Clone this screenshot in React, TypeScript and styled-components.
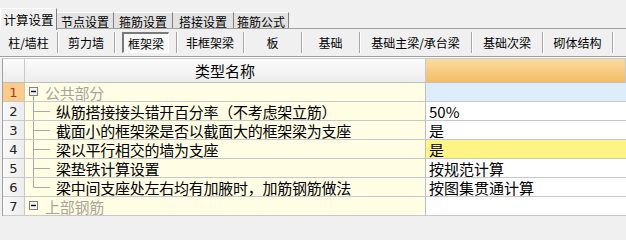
import styled, { createGlobalStyle, css } from "styled-components";

const GlobalStyle = createGlobalStyle`
  html, body {
    margin: 0;
    padding: 0;
    overflow: hidden;
    background: #f0f0f0;
    font-family: "Noto Sans CJK SC", "Liberation Sans", sans-serif;
  }
`;

const tabs = ["计算设置", "节点设置", "箍筋设置", "搭接设置", "箍筋公式"];
const tabWidths = [57, 57, 59, 61, 55];

const tools = [
  { label: "柱/墙柱", width: 58 },
  { label: "剪力墙", width: 57 },
  { label: "框架梁", width: 62, pressed: true },
  { label: "非框架梁", width: 67 },
  { label: "板", width: 58 },
  { label: "基础", width: 58 },
  { label: "基础主梁/承台梁", width: 112 },
  { label: "基础次梁", width: 71 },
  { label: "砌体结构", width: 70 },
];

type Row = {
  no: number;
  name: string;
  value?: string;
  group?: boolean;
  last?: boolean;
  open?: boolean;
};

const rows: Row[] = [
  { no: 1, name: "公共部分", group: true, open: true },
  { no: 2, name: "纵筋搭接接头错开百分率（不考虑架立筋）", value: "50%" },
  { no: 3, name: "截面小的框架梁是否以截面大的框架梁为支座", value: "是" },
  { no: 4, name: "梁以平行相交的墙为支座", value: "是" },
  { no: 5, name: "梁垫铁计算设置", value: "按规范计算" },
  { no: 6, name: "梁中间支座处左右均有加腋时，加筋钢筋做法", value: "按图集贯通计算", last: true },
  { no: 7, name: "上部钢筋", group: true },
];

const selectedNo = 1;
const highlightNo = 4;

const TabStrip = styled.div`
  display: flex;
  align-items: flex-end;
  height: 28px;
  border-bottom: 1px solid #a0a0a0;
`;

const Tab = styled.div<{ $active?: boolean; $w: number }>`
  box-sizing: border-box;
  width: ${(p) => p.$w}px;
  display: flex;
  align-items: center;
  justify-content: center;
  white-space: nowrap;
  font-size: 12px;
  color: #000;
  ${(p) =>
    p.$active
      ? css`
          height: 22px;
          margin-bottom: -2px;
          background: #f0f0f0;
          border-top: 1px solid #ffffff;
          border-left: 1px solid #ffffff;
          border-right: 1px solid #808080;
          font-size: 12.5px;
          position: relative;
          z-index: 1;
        `
      : css`
          height: 16px;
          background: #e2e2e2;
          border-top: 1px solid #ffffff;
          border-right: 1px solid #808080;
          padding-top: 1px;
        `}
`;

const Toolbar = styled.div`
  display: flex;
  align-items: center;
  height: 28px;
  box-sizing: border-box;
  padding: 3px 0 4px;
  border-bottom: 1px solid #a0a0a0;
  box-shadow: 0 1px 0 #ffffff;
`;

const ToolCell = styled.div<{ $w: number }>`
  box-sizing: border-box;
  width: ${(p) => p.$w}px;
  height: 21px;
  display: flex;
  align-items: center;
  justify-content: center;
  border-right: 1px solid #a8a8a8;
  box-shadow: 1px 0 0 #ffffff;
`;

const ToolButton = styled.div<{ $pressed?: boolean }>`
  box-sizing: border-box;
  height: 21px;
  display: flex;
  align-items: center;
  justify-content: center;
  white-space: nowrap;
  font-size: 12px;
  color: #000;
  ${(p) =>
    p.$pressed &&
    css`
      background: #f8f8f8;
      border-top: 2px solid #7a7a7a;
      border-left: 2px solid #7a7a7a;
      border-bottom: 1px solid #ffffff;
      border-right: 1px solid #ffffff;
      width: 47px;
      padding-top: 1px;
    `}
`;

const Grid = styled.div`
  display: grid;
  grid-template-columns: 22px 401px 1fr;
  margin: 1px 0 0 2px;
  border-left: 1px solid #a0a0a0;
  border-top: 1px solid #c8c8c8;
  background: #ffffff;
`;

const HeadCell = styled.div<{ $accent?: boolean }>`
  box-sizing: border-box;
  height: 24px;
  display: flex;
  align-items: center;
  justify-content: center;
  font-size: 15px;
  color: #000;
  border-right: 1px solid #c8c8c8;
  border-bottom: 1px solid #c0c0c0;
  background: ${(p) =>
    p.$accent
      ? "linear-gradient(#fbdba0, #f2bd66)"
      : "linear-gradient(#fcfcfc, #ececec)"};
`;

const NoCell = styled.div<{ $selected?: boolean }>`
  box-sizing: border-box;
  height: 19px;
  display: flex;
  align-items: center;
  justify-content: center;
  font-family: "DejaVu Sans", "Liberation Sans", sans-serif;
  font-size: 13px;
  color: ${(p) => (p.$selected ? "#b03818" : "#202020")};
  border-right: 1px solid #c8c8c8;
  border-bottom: 1px solid #c8c8c8;
  background: ${(p) =>
    p.$selected ? "#fbcb8a" : "linear-gradient(90deg, #f8f8f8, #ededed)"};
`;

const NameCell = styled.div<{ $group?: boolean }>`
  box-sizing: border-box;
  height: 19px;
  display: flex;
  align-items: center;
  overflow: hidden;
  white-space: nowrap;
  font-size: 15px;
  letter-spacing: -0.25px;
  color: ${(p) => (p.$group ? "#a8a49c" : "#000")};
  background: #fffee4;
  border-right: 1px solid #c0c0c0;
  border-bottom: 1px solid #c8c8c8;
`;

const ValueCell = styled.div<{ $tone: "plain" | "selected" | "marked" }>`
  box-sizing: border-box;
  height: 19px;
  display: flex;
  align-items: center;
  padding-left: 3px;
  overflow: hidden;
  white-space: nowrap;
  font-size: 15px;
  color: #000;
  border-bottom: 1px solid #c8c8c8;
  background: ${(p) =>
    p.$tone === "selected" ? "#deedfc" : p.$tone === "marked" ? "#fdf483" : "#ffffff"};
`;

const Guide = styled.svg`
  flex: none;
  display: block;
`;

function GroupGuide({ open }: { open?: boolean }) {
  return (
    <Guide width="20" height="18" viewBox="0 0 20 18">
      {open && <line x1="8.5" y1="13" x2="8.5" y2="18" stroke="#a8a8a8" />}
      <rect x="4.5" y="4.5" width="8" height="8" fill="#f4f4f4" stroke="#808080" />
      <line x1="6" y1="8.5" x2="11" y2="8.5" stroke="#000" strokeWidth="1.4" />
    </Guide>
  );
}

function ChildGuide({ last }: { last?: boolean }) {
  return (
    <Guide width="31" height="18" viewBox="0 0 31 18">
      <line x1="8.5" y1="0" x2="8.5" y2={last ? 9.5 : 18} stroke="#a8a8a8" />
      <line x1="8.5" y1="9.5" x2="25" y2="9.5" stroke="#a8a8a8" />
    </Guide>
  );
}

function Line({ row }: { row: Row }) {
  const tone =
    row.no === selectedNo ? "selected" : row.no === highlightNo ? "marked" : "plain";
  return (
    <>
      <NoCell $selected={row.no === selectedNo}>{row.no}</NoCell>
      <NameCell $group={row.group}>
        {row.group ? <GroupGuide open={row.open} /> : <ChildGuide last={row.last} />}
        {row.name}
      </NameCell>
      <ValueCell $tone={tone}>{row.value}</ValueCell>
    </>
  );
}

export default function App() {
  return (
    <>
      <GlobalStyle />
      <TabStrip>
        {tabs.map((t, i) => (
          <Tab key={t} $active={i === 0} $w={tabWidths[i]}>
            {t}
          </Tab>
        ))}
      </TabStrip>
      <Toolbar>
        {tools.map((t) => (
          <ToolCell key={t.label} $w={t.width}>
            <ToolButton $pressed={t.pressed}>{t.label}</ToolButton>
          </ToolCell>
        ))}
      </Toolbar>
      <Grid>
        <HeadCell />
        <HeadCell>类型名称</HeadCell>
        <HeadCell $accent />
        {rows.map((r) => (
          <Line key={r.no} row={r} />
        ))}
      </Grid>
    </>
  );
}
